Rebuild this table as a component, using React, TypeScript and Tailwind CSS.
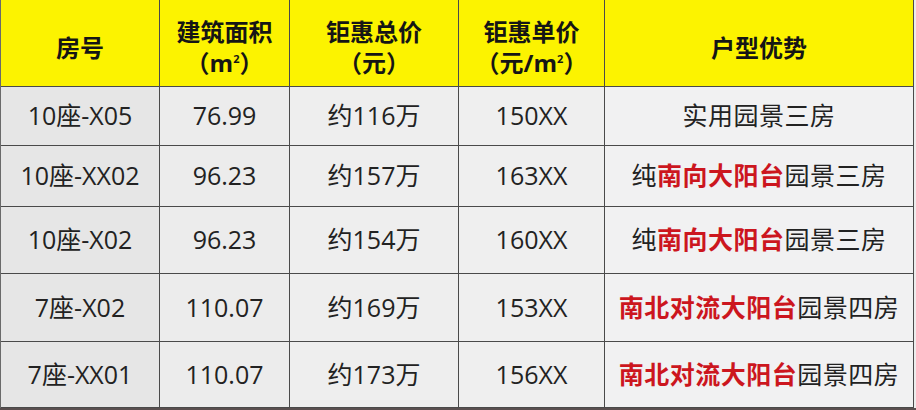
import React from "react";

type Row = {
  no: string;
  area: string;
  total: string;
  unit: string;
  pre?: string;
  red?: string;
  post: string;
};

const rows: Row[] = [
  { no: "10座-X05", area: "76.99", total: "约116万", unit: "150XX", post: "实用园景三房" },
  { no: "10座-XX02", area: "96.23", total: "约157万", unit: "163XX", pre: "纯", red: "南向大阳台", post: "园景三房" },
  { no: "10座-X02", area: "96.23", total: "约154万", unit: "160XX", pre: "纯", red: "南向大阳台", post: "园景三房" },
  { no: "7座-X02", area: "110.07", total: "约169万", unit: "153XX", red: "南北对流大阳台", post: "园景四房" },
  { no: "7座-XX01", area: "110.07", total: "约173万", unit: "156XX", red: "南北对流大阳台", post: "园景四房" },
];

const font = { fontFamily: '"Open Sans", "Noto Sans CJK SC", sans-serif' };

const head = "flex flex-col items-center justify-center pt-2 bg-[#fcf300] border-r border-b border-[#4a4a4a] text-[24px] leading-[31px] font-bold text-[#151515]";
const cell = "flex items-center justify-center border-r border-b border-[#4a4a4a] text-[25px] text-[#222]";

const M2 = () => (
  <span>
    m<sup className="text-[11px] -top-[9px]">2</sup>
  </span>
);

export default function App() {
  return (
    <div className="w-[916px] h-[410px] bg-[#ececec] overflow-hidden" style={font}>
      <div className="grid grid-cols-[159px_130px_169px_146px_309px] grid-rows-[87px_59px_61px_67px_68px_66px] w-[913px] border-l border-[#6a6a6a]">
        <div className={head}>房号</div>
        <div className={head}>
          <span>建筑面积</span>
          <span>
            （<M2 />）
          </span>
        </div>
        <div className={head}>
          <span>钜惠总价</span>
          <span>（元）</span>
        </div>
        <div className={head}>
          <span>钜惠单价</span>
          <span>
            （元/<M2 />）
          </span>
        </div>
        <div className={head}>户型优势</div>

        {rows.map((r) => (
          <React.Fragment key={r.no}>
            <div className={`${cell} bg-[#e6e6e6]`}>{r.no}</div>
            <div className={`${cell} bg-[#ececec]`}>{r.area}</div>
            <div className={`${cell} bg-[#eeeeee]`}>{r.total}</div>
            <div className={`${cell} bg-[#efefef]`}>{r.unit}</div>
            <div className={`${cell} bg-[#f1f1f2] tracking-[0.5px]`}>
              {r.pre}
              {r.red && <span className="font-bold text-[#cc161e]">{r.red}</span>}
              {r.post}
            </div>
          </React.Fragment>
        ))}
      </div>
      <div className="h-[2px] bg-[#5a4f4f]" />
    </div>
  );
}
